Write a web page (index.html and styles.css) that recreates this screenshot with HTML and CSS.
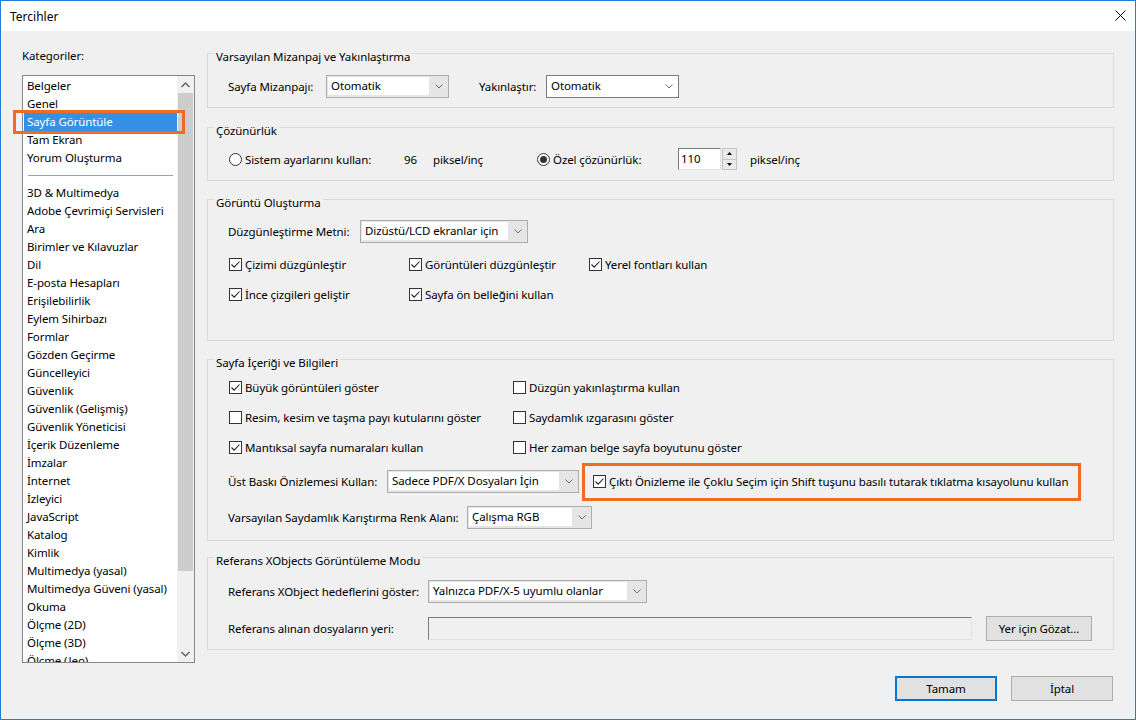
FILE: index.html
```html
<!DOCTYPE html>
<html lang="tr">
<head>
    <meta charset="UTF-8">
    <meta name="viewport" content="width=device-width, initial-scale=1.0">
    <title>Tercihler</title>
    <link rel="stylesheet" href="styles.css">
</head>
<body>
<div class="window">
    <!-- Başlık çubuğu -->
    <div class="titlebar">
        <span class="title">Tercihler</span>
        <span class="close">
            <svg width="11" height="11" viewBox="0 0 11 11"><path d="M0.5 0.5L10.5 10.5M10.5 0.5L0.5 10.5" stroke="#000" stroke-width="1"/></svg>
        </span>
    </div>

    <div class="main">
        <!-- Kategoriler -->
        <div class="categories">
            <div class="cat-label">Kategoriler:</div>
            <div class="listbox">
                <div class="list-items">
                    <div class="item">Belgeler</div>
                    <div class="item">Genel</div>
                    <div class="item selected">Sayfa Görüntüle</div>
                    <div class="item">Tam Ekran</div>
                    <div class="item">Yorum Oluşturma</div>
                    <div class="separator"></div>
                    <div class="item">3D &amp; Multimedya</div>
                    <div class="item">Adobe Çevrimiçi Servisleri</div>
                    <div class="item">Ara</div>
                    <div class="item">Birimler ve Kılavuzlar</div>
                    <div class="item">Dil</div>
                    <div class="item">E-posta Hesapları</div>
                    <div class="item">Erişilebilirlik</div>
                    <div class="item">Eylem Sihirbazı</div>
                    <div class="item">Formlar</div>
                    <div class="item">Gözden Geçirme</div>
                    <div class="item">Güncelleyici</div>
                    <div class="item">Güvenlik</div>
                    <div class="item">Güvenlik (Gelişmiş)</div>
                    <div class="item">Güvenlik Yöneticisi</div>
                    <div class="item">İçerik Düzenleme</div>
                    <div class="item">İmzalar</div>
                    <div class="item">İnternet</div>
                    <div class="item">İzleyici</div>
                    <div class="item">JavaScript</div>
                    <div class="item">Katalog</div>
                    <div class="item">Kimlik</div>
                    <div class="item">Multimedya (yasal)</div>
                    <div class="item">Multimedya Güveni (yasal)</div>
                    <div class="item">Okuma</div>
                    <div class="item">Ölçme (2D)</div>
                    <div class="item">Ölçme (3D)</div>
                    <div class="item">Ölçme (Jeo)</div>
                </div>
                <div class="scrollbar">
                    <div class="sb-arrow">
                        <svg width="9" height="6" viewBox="0 0 9 6"><path d="M0.5 5L4.5 1L8.5 5" fill="none" stroke="#606060" stroke-width="1.4"/></svg>
                    </div>
                    <div class="sb-track"><div class="sb-thumb"></div></div>
                    <div class="sb-arrow">
                        <svg width="9" height="6" viewBox="0 0 9 6"><path d="M0.5 1L4.5 5L8.5 1" fill="none" stroke="#606060" stroke-width="1.4"/></svg>
                    </div>
                </div>
            </div>
            <!-- turuncu işaret kutusu -->
            <div class="mark-list"></div>
        </div>

        <!-- Ayarlar -->
        <div class="settings">
            <fieldset class="group g1">
                <legend>Varsayılan Mizanpaj ve Yakınlaştırma</legend>
                <div class="row">
                    <span class="lbl w-mizanpaj">Sayfa Mizanpajı:</span>
                    <div class="select s-mizanpaj">
                        <span class="value">Otomatik</span>
                        <span class="chev"><svg width="8" height="5" viewBox="0 0 8 5"><path d="M0.5 0.5L4 4L7.5 0.5" fill="none" stroke="#707070" stroke-width="1"/></svg></span>
                    </div>
                    <span class="lbl w-yakin">Yakınlaştır:</span>
                    <div class="select white s-yakin">
                        <span class="value">Otomatik</span>
                        <span class="chev"><svg width="8" height="5" viewBox="0 0 8 5"><path d="M0.5 0.5L4 4L7.5 0.5" fill="none" stroke="#707070" stroke-width="1"/></svg></span>
                    </div>
                </div>
            </fieldset>

            <fieldset class="group g2">
                <legend>Çözünürlük</legend>
                <div class="row row-22">
                    <span class="opt w-sistem"><span class="radio"></span>Sistem ayarlarını kullan:</span>
                    <span class="lbl w-96">96</span>
                    <span class="lbl w-piksel">piksel/inç</span>
                    <span class="opt w-ozel"><span class="radio checked"></span>Özel çözünürlük:</span>
                    <span class="field f-dpi">110</span>
                    <span class="spin">
                        <span class="spin-btn"><svg width="5" height="3" viewBox="0 0 5 3"><path d="M2.5 0L5 3H0Z" fill="#000"/></svg></span>
                        <span class="spin-btn"><svg width="5" height="3" viewBox="0 0 5 3"><path d="M0 0H5L2.5 3Z" fill="#000"/></svg></span>
                    </span>
                    <span class="lbl unit">piksel/inç</span>
                </div>
            </fieldset>

            <fieldset class="group g3">
                <legend>Görüntü Oluşturma</legend>
                <div class="row">
                    <span class="lbl w-duzgun">Düzgünleştirme Metni:</span>
                    <div class="select s-duzgun">
                        <span class="value">Dizüstü/LCD ekranlar için</span>
                        <span class="chev"><svg width="8" height="5" viewBox="0 0 8 5"><path d="M0.5 0.5L4 4L7.5 0.5" fill="none" stroke="#707070" stroke-width="1"/></svg></span>
                    </div>
                </div>
                <div class="checks first">
                    <span class="opt c-180"><span class="cb"><svg width="11" height="11" viewBox="0 0 11 11"><path d="M1.5 5.5L4.2 8.2L9.5 2.5" fill="none" stroke="#222" stroke-width="1.1"/></svg></span>Çizimi düzgünleştir</span>
                    <span class="opt c-180"><span class="cb"><svg width="11" height="11" viewBox="0 0 11 11"><path d="M1.5 5.5L4.2 8.2L9.5 2.5" fill="none" stroke="#222" stroke-width="1.1"/></svg></span>Görüntüleri düzgünleştir</span>
                    <span class="opt"><span class="cb"><svg width="11" height="11" viewBox="0 0 11 11"><path d="M1.5 5.5L4.2 8.2L9.5 2.5" fill="none" stroke="#222" stroke-width="1.1"/></svg></span>Yerel fontları kullan</span>
                </div>
                <div class="checks">
                    <span class="opt c-180"><span class="cb"><svg width="11" height="11" viewBox="0 0 11 11"><path d="M1.5 5.5L4.2 8.2L9.5 2.5" fill="none" stroke="#222" stroke-width="1.1"/></svg></span>İnce çizgileri geliştir</span>
                    <span class="opt"><span class="cb"><svg width="11" height="11" viewBox="0 0 11 11"><path d="M1.5 5.5L4.2 8.2L9.5 2.5" fill="none" stroke="#222" stroke-width="1.1"/></svg></span>Sayfa ön belleğini kullan</span>
                </div>
            </fieldset>

            <fieldset class="group g4">
                <legend>Sayfa İçeriği ve Bilgileri</legend>
                <div class="checks">
                    <span class="opt c-284"><span class="cb"><svg width="11" height="11" viewBox="0 0 11 11"><path d="M1.5 5.5L4.2 8.2L9.5 2.5" fill="none" stroke="#222" stroke-width="1.1"/></svg></span>Büyük görüntüleri göster</span>
                    <span class="opt"><span class="cb"></span>Düzgün yakınlaştırma kullan</span>
                </div>
                <div class="checks">
                    <span class="opt c-284"><span class="cb"></span>Resim, kesim ve taşma payı kutularını göster</span>
                    <span class="opt"><span class="cb"></span>Saydamlık ızgarasını göster</span>
                </div>
                <div class="checks">
                    <span class="opt c-284"><span class="cb"><svg width="11" height="11" viewBox="0 0 11 11"><path d="M1.5 5.5L4.2 8.2L9.5 2.5" fill="none" stroke="#222" stroke-width="1.1"/></svg></span>Mantıksal sayfa numaraları kullan</span>
                    <span class="opt"><span class="cb"></span>Her zaman belge sayfa boyutunu göster</span>
                </div>
                <div class="row row-baski">
                    <span class="lbl w-baski">Üst Baskı Önizlemesi Kullan:</span>
                    <div class="select s-baski">
                        <span class="value">Sadece PDF/X Dosyaları İçin</span>
                        <span class="chev"><svg width="8" height="5" viewBox="0 0 8 5"><path d="M0.5 0.5L4 4L7.5 0.5" fill="none" stroke="#707070" stroke-width="1"/></svg></span>
                    </div>
                    <span class="opt marked"><span class="cb"><svg width="11" height="11" viewBox="0 0 11 11"><path d="M1.5 5.5L4.2 8.2L9.5 2.5" fill="none" stroke="#222" stroke-width="1.1"/></svg></span>Çıktı Önizleme ile Çoklu Seçim için Shift tuşunu basılı tutarak tıklatma kısayolunu kullan</span>
                </div>
                <div class="row row-renk">
                    <span class="lbl w-renk">Varsayılan Saydamlık Karıştırma Renk Alanı:</span>
                    <div class="select s-renk">
                        <span class="value">Çalışma RGB</span>
                        <span class="chev"><svg width="8" height="5" viewBox="0 0 8 5"><path d="M0.5 0.5L4 4L7.5 0.5" fill="none" stroke="#707070" stroke-width="1"/></svg></span>
                    </div>
                </div>
            </fieldset>

            <fieldset class="group g5">
                <legend>Referans XObjects Görüntüleme Modu</legend>
                <div class="row">
                    <span class="lbl w-ref">Referans XObject hedeflerini göster:</span>
                    <div class="select s-ref">
                        <span class="value">Yalnızca PDF/X-5 uyumlu olanlar</span>
                        <span class="chev"><svg width="8" height="5" viewBox="0 0 8 5"><path d="M0.5 0.5L4 4L7.5 0.5" fill="none" stroke="#707070" stroke-width="1"/></svg></span>
                    </div>
                </div>
                <div class="row row-yer">
                    <span class="lbl w-ref">Referans alınan dosyaların yeri:</span>
                    <span class="field f-path"></span>
                    <button class="btn b-gozat">Yer için Gözat...</button>
                </div>
            </fieldset>
        </div>
    </div>

    <div class="footer">
        <button class="btn default">Tamam</button>
        <button class="btn">İptal</button>
    </div>
</div>
</body>
</html>
```

FILE: styles.css
```css
* {
    box-sizing: border-box;
}
html, body {
    margin: 0;
    padding: 0;
}
body {
    font-family: "Noto Sans", "Open Sans", sans-serif;
    font-size: 11.5px;
    letter-spacing: -0.1px;
    color: #000;
    background: #f0f0f0;
}
.window {
    width: 1136px;
    height: 720px;
    border: 1px solid #1c7ed6;
    background: #f0f0f0;
    display: flex;
    flex-direction: column;
}
.titlebar {
    height: 30px;
    flex: none;
    background: #fff;
    display: flex;
    align-items: center;
    justify-content: space-between;
    padding: 0 9px 0 9px;
    font-size: 12px;
    letter-spacing: 0;
}
.close {
    display: flex;
    margin-top: -1px;
}

/* ana bölüm */
.main {
    display: flex;
    gap: 12px;
    padding: 0 21px;
    flex: none;
}
.categories {
    position: relative;
    width: 173px;
    flex: none;
    padding-top: 17px;
}
.cat-label {
    line-height: 16px;
    margin-bottom: 11px;
}
.listbox {
    width: 173px;
    height: 588px;
    border: 1px solid #828790;
    background: #fff;
    display: flex;
}
.list-items {
    flex: 1;
    overflow: hidden;
    padding-top: 1px;
}
.item {
    height: 18px;
    line-height: 18px;
    padding-left: 3px;
    margin-left: 1px;
    white-space: nowrap;
}
.item.selected {
    background: #3591e6;
    color: #fff;
}
.separator {
    height: 1px;
    margin: 8px 4px 8px 5px;
    background: #7ea7d6;
}
.scrollbar {
    width: 17px;
    flex: none;
    display: flex;
    flex-direction: column;
    background: #f0f0f0;
}
.sb-arrow {
    height: 17px;
    display: flex;
    align-items: center;
    justify-content: center;
}
.sb-track {
    flex: 1;
}
.sb-thumb {
    height: 478px;
    margin: 0 1px;
    background: #cdcdcd;
}
.mark-list {
    position: absolute;
    left: -9px;
    top: 79px;
    width: 172px;
    height: 24px;
    border: 3px solid #f26b23;
}

/* ayarlar */
.settings {
    flex: 1;
    padding-top: 10px;
}
.group {
    margin: 0;
    padding: 9px 20px 9px;
    border: 1px solid #dadada;
    min-width: 0;
}
.group legend {
    padding: 8px 2px 0;
    margin-left: -14px;
    line-height: 16px;
}
.g1 { padding-top: 10px; }
.g2 { margin-top: 7px; padding-bottom: 10px; }
.g3 { margin-top: 6px; padding-bottom: 36px; }
.g4 { margin-top: 6px; padding-top: 6px; padding-bottom: 11px; }
.g5 { margin-top: 4px; padding-top: 11px; padding-bottom: 8px; }

.row {
    display: flex;
    align-items: center;
    height: 23px;
}
.row-22 { height: 22px; }
.row-baski { margin-top: 13px; }
.row-renk { margin-top: 13px; }
.row-yer { margin-top: 13px; height: 25px; }
.lbl {
    flex: none;
    white-space: nowrap;
}
.w-mizanpaj { width: 98px; }
.w-yakin { width: 67px; margin-left: 30px; }
.w-96 { width: 29px; }
.w-piksel { width: 103px; }
.w-duzgun { width: 132px; }
.w-baski { width: 159px; }
.w-renk { width: 239px; }
.w-ref { width: 200px; }
.unit { margin-left: 13px; }

.opt {
    display: flex;
    align-items: center;
    flex: none;
    white-space: nowrap;
}
.w-sistem { width: 176px; }
.w-ozel { width: 142px; }
.c-180 { width: 180px; }
.c-284 { width: 284px; }

.checks {
    display: flex;
    align-items: center;
    height: 20px;
}
.checks + .checks {
    margin-top: 10px;
}
.checks.first {
    margin-top: 11px;
}
.g4 .checks:first-of-type {
    margin-top: 0;
}

.cb {
    width: 13px;
    height: 13px;
    border: 1px solid #333;
    background: #fff;
    margin: 0 3px 0 1px;
    flex: none;
    display: flex;
    align-items: center;
    justify-content: center;
}
.radio {
    width: 13px;
    height: 13px;
    border: 1px solid #333;
    border-radius: 50%;
    background: #fff;
    margin: 0 3px 0 1px;
    flex: none;
    display: flex;
    align-items: center;
    justify-content: center;
}
.radio.checked::after {
    content: "";
    width: 7px;
    height: 7px;
    border-radius: 50%;
    background: #333;
}

.select {
    flex: none;
    display: flex;
    align-items: stretch;
    height: 23px;
    border: 1px solid #adadad;
    background: #e5e5e5;
    padding: 1px 0 2px 1px;
}
.select .value {
    flex: 1;
    background: #fff;
    padding-left: 3px;
    line-height: 18px;
    white-space: nowrap;
}
.select .chev {
    width: 19px;
    display: flex;
    align-items: center;
    justify-content: center;
}
.select.white {
    background: #fff;
    border-color: #7a7a7a;
}
.s-mizanpaj { width: 123px; }
.s-yakin { width: 133px; }
.s-duzgun { width: 168px; }
.s-baski { width: 192px; }
.s-renk { width: 125px; }
.s-ref { width: 219px; }

.field {
    flex: none;
    height: 22px;
    border-top: 1px solid #7a7a7a;
    border-left: 1px solid #7a7a7a;
    border-right: 1px solid #e3e3e3;
    border-bottom: 1px solid #e3e3e3;
    line-height: 20px;
    padding-left: 2px;
}
.f-dpi {
    width: 43px;
    background: #fff;
}
.f-path {
    width: 544px;
    height: 23px;
    background: #f0f0f0;
}
.spin {
    display: flex;
    flex-direction: column;
    width: 15px;
    height: 22px;
    margin-left: 1px;
}
.spin-btn {
    flex: 1;
    display: flex;
    align-items: center;
    justify-content: center;
    background: #e9e9e9;
    border: 1px solid #c4c4c4;
}
.spin-btn + .spin-btn {
    border-top: none;
}

.marked {
    width: 487px;
    height: 26px;
    margin-left: 9px;
    padding-left: 4px;
    outline: 3px solid #f26b23;
    outline-offset: 3px;
}

.btn {
    font-family: inherit;
    font-size: 11.5px;
    letter-spacing: -0.1px;
    color: #000;
    height: 25px;
    border: 1px solid #adadad;
    background: #e1e1e1;
    padding: 0;
}
.b-gozat {
    width: 106px;
    margin-left: 14px;
}
.footer {
    display: flex;
    justify-content: flex-end;
    gap: 14px;
    padding: 13px 22px 0 0;
}
.footer .btn {
    width: 102px;
}
.btn.default {
    border: 2px solid #0078d7;
}
```
